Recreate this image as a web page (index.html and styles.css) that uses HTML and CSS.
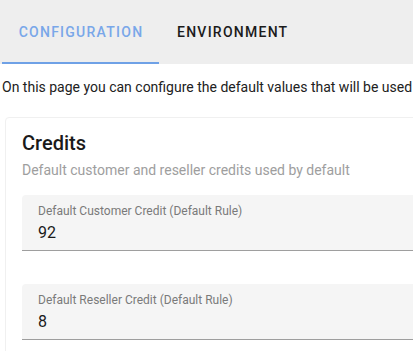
FILE: index.html
```html
<!DOCTYPE html>
<html>
<head>
<meta charset="utf-8">
<link rel="stylesheet" href="styles.css">
</head>
<body>
<div class="tabs">
  <div class="tab active">Configuration</div>
  <div class="tab">Environment</div>
</div>
<p class="intro">On this page you can configure the default values that will be used</p>
<div class="card">
  <h2 class="card-title">Credits</h2>
  <p class="card-sub">Default customer and reseller credits used by default</p>
  <div class="field">
    <label class="field-label">Default Customer Credit (Default Rule)</label>
    <div class="field-value">92</div>
  </div>
  <div class="field">
    <label class="field-label">Default Reseller Credit (Default Rule)</label>
    <div class="field-value">8</div>
  </div>
</div>
</body>
</html>
```
FILE: styles.css
```css
html, body {
  margin: 0;
  padding: 0;
  overflow: hidden;
  background: #ffffff;
}
body {
  font-family: Roboto, "Liberation Sans", sans-serif;
  color: #212121;
  width: 413px;
  height: 351px;
}
.tabs {
  display: flex;
  height: 64px;
  background: #eeeeee;
  padding-left: 2px;
  box-sizing: border-box;
}
.tab {
  display: flex;
  align-items: center;
  justify-content: center;
  padding: 0 17px 0 18px;
  font-size: 14px;
  font-weight: 500;
  letter-spacing: 1.25px;
  text-transform: uppercase;
  color: #1b1b1b;
  box-sizing: border-box;
  border-bottom: 2px solid transparent;
  padding-top: 2px;
}
.tab.active {
  color: #79a7e9;
  border-bottom-color: #6fa1e6;
  width: 157px;
}
.intro {
  margin: 13px 0 0 2px;
  font-size: 14px;
  line-height: 20px;
  white-space: nowrap;
  color: #212121;
}
.card {
  margin: 20px 0 0 5px;
  width: 460px;
  border: 1px solid #f0f0f0;
  border-radius: 4px;
  padding: 11px 16px 16px 16px;
  box-sizing: border-box;
}
.card-title {
  margin: 0;
  font-size: 20px;
  font-weight: 500;
  line-height: 28px;
  color: #1a1a1a;
}
.card-sub {
  margin: 3px 0 0 0;
  font-size: 14px;
  line-height: 20px;
  color: #9e9e9e;
}
.field {
  margin-top: 15px;
  height: 56px;
  background: #f5f5f5;
  border-radius: 4px 4px 0 0;
  border-bottom: 1px solid #9e9e9e;
  box-sizing: border-box;
  padding: 8px 16px 0 16px;
}
.field + .field {
  margin-top: 33px;
}
.field-label {
  display: block;
  font-size: 12px;
  line-height: 16px;
  color: #7a7a7a;
}
.field-value {
  font-size: 16px;
  line-height: 24px;
  color: #1a1a1a;
  margin-top: 2px;
}
```
